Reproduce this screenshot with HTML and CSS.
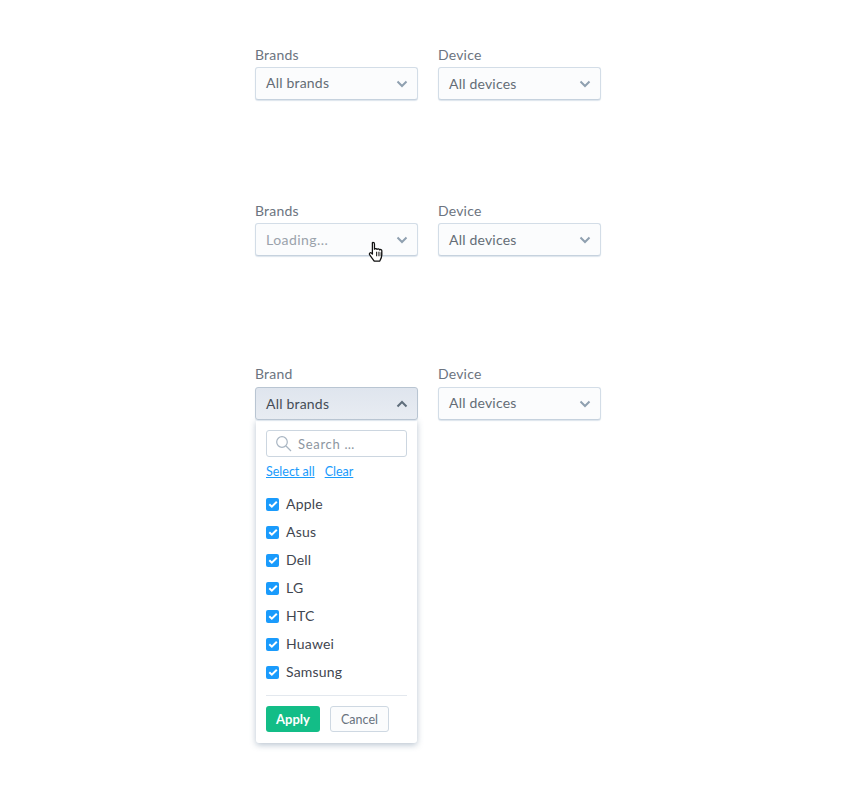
FILE: index.html
```html
<!DOCTYPE html>
<html lang="en">
<head>
<meta charset="UTF-8">
<title>Filters</title>
<link rel="stylesheet" href="styles.css">
</head>
<body>
<div class="page">
	<div class="row row-first">
		<div class="field">
			<label class="lbl">Brands</label>
			<div class="select">
				<span class="val val-up">All brands</span>
				<svg class="arrow" width="12" height="8" viewBox="0 0 12 8"><path d="M1.500 1.500 6 6l4.500-4.500"/></svg>
			</div>
		</div>
		<div class="field">
			<label class="lbl">Device</label>
			<div class="select">
				<span class="val">All devices</span>
				<svg class="arrow" width="12" height="8" viewBox="0 0 12 8"><path d="M1.500 1.500 6 6l4.500-4.500"/></svg>
			</div>
		</div>
	</div>

	<div class="row row-second">
		<div class="field">
			<label class="lbl">Brands</label>
			<div class="select">
				<span class="val loading">Loading...</span>
				<svg class="arrow" width="12" height="8" viewBox="0 0 12 8"><path d="M1.500 1.500 6 6l4.500-4.500"/></svg>
				<svg class="cursor" width="16" height="20" viewBox="0 0 16 20">
					<path d="M4.500 1.600c.8 0 1.300.6 1.300 1.400v4.600c.2-.8 2-.9 2.200.1.400-.7 2-.6 2.200.4.500-.5 1.900-.3 2 .8v3.400c0 2.700-1.300 4.600-1.900 5.700H5.600C4.700 16.600 2.600 14 1.600 12.400c-.7-1.100.5-2.300 1.500-1.500l.9.800V3c0-.8-.3-1.400.5-1.400z" fill="#fff" stroke="#111" stroke-width="1.100" stroke-linejoin="round"/>
					<path d="M7.700 9.800v4M9.700 9.800v4M11.600 10.300v3.500" fill="none" stroke="#111" stroke-width=".9"/>
				</svg>
			</div>
		</div>
		<div class="field">
			<label class="lbl">Device</label>
			<div class="select">
				<span class="val">All devices</span>
				<svg class="arrow" width="12" height="8" viewBox="0 0 12 8"><path d="M1.500 1.500 6 6l4.500-4.500"/></svg>
			</div>
		</div>
	</div>

	<div class="row row-third">
		<div class="field">
			<label class="lbl">Brand</label>
			<div class="select open">
				<span class="val">All brands</span>
				<svg class="arrow" width="12" height="8" viewBox="0 0 12 8"><path d="M1.500 6.500 6 2l4.500 4.500"/></svg>
			</div>
			<div class="menu">
				<div class="search">
					<svg width="17" height="17" viewBox="0 0 17 17"><circle cx="7" cy="7" r="5.300"/><path d="m11 11 5 5"/></svg>
					<span>Search …</span>
				</div>
				<div class="links"><a href="#">Select all</a><a href="#">Clear</a></div>
				<ul class="list">
					<li><span class="check"><svg width="14" height="14" viewBox="0 0 14 14"><path d="m3.300 7.300 2.500 2.400 5-5"/></svg></span>Apple</li>
					<li><span class="check"><svg width="14" height="14" viewBox="0 0 14 14"><path d="m3.300 7.300 2.500 2.400 5-5"/></svg></span>Asus</li>
					<li><span class="check"><svg width="14" height="14" viewBox="0 0 14 14"><path d="m3.300 7.300 2.500 2.400 5-5"/></svg></span>Dell</li>
					<li><span class="check"><svg width="14" height="14" viewBox="0 0 14 14"><path d="m3.300 7.300 2.500 2.400 5-5"/></svg></span>LG</li>
					<li><span class="check"><svg width="14" height="14" viewBox="0 0 14 14"><path d="m3.300 7.300 2.500 2.400 5-5"/></svg></span>HTC</li>
					<li><span class="check"><svg width="14" height="14" viewBox="0 0 14 14"><path d="m3.300 7.300 2.500 2.400 5-5"/></svg></span>Huawei</li>
					<li><span class="check"><svg width="14" height="14" viewBox="0 0 14 14"><path d="m3.300 7.300 2.500 2.400 5-5"/></svg></span>Samsung</li>
				</ul>
				<div class="actions">
					<button class="apply">Apply</button>
					<button class="cancel">Cancel</button>
				</div>
			</div>
		</div>
		<div class="field">
			<label class="lbl">Device</label>
			<div class="select">
				<span class="val val-up">All devices</span>
				<svg class="arrow" width="12" height="8" viewBox="0 0 12 8"><path d="M1.500 1.500 6 6l4.500-4.500"/></svg>
			</div>
		</div>
	</div>
</div>
</body>
</html>
```

FILE: styles.css
```css
*{margin:0;padding:0;box-sizing:border-box;}
html{background:#fff;}
body{
	font-family:'Lato','Open Sans',sans-serif;
	font-size:14px;
	color:#464e56;
}
ul li{list-style:none;}
a{color:#1a9bfc;}

.page{width:346px;margin-left:255px;padding-bottom:48px;}
.row{display:grid;grid-template-columns:163px 163px;column-gap:20px;align-items:start;}
.row-first{padding-top:47px;}
.row-second{padding-top:103px;}
.row-third{padding-top:110px;}

.lbl{display:block;height:20px;line-height:15px;font-size:14px;color:#6c7480;letter-spacing:.2px;}
.row-third .lbl{height:21px;}

.select{
	position:relative;
	display:flex;
	align-items:center;
	justify-content:space-between;
	height:33px;
	padding:0 9px 0 10px;
	background:#fbfcfd;
	border:1px solid #d3dde7;
	border-bottom-color:#c6d2de;
	border-radius:3px;
	box-shadow:0 1px 1px rgba(170,190,210,.4);
}
.val{font-size:14px;line-height:20px;padding-top:1px;color:#646d76;letter-spacing:.2px;}
.val-up{padding:0 0 1px;}
.loading{color:#9aa2ab;letter-spacing:.45px;}
.arrow{fill:none;stroke:#8fa0b0;stroke-width:2;}
.cursor{position:absolute;left:113px;top:18px;transform:scale(1.150);}

.select.open{
	background:linear-gradient(#dfe5ee,#e8ecf2);
	border-color:#b9c5d2;
}
.open .val{color:#454d57;}
.open .arrow{stroke:#5f6e7c;}

.menu{
	height:323px;
	margin:0 1px;
	padding:10px 10px 0;
	background:#fff;
	border-radius:0 0 3px 3px;
	box-shadow:0 2px 6px rgba(100,125,150,.45);
}
.search{
	display:flex;
	align-items:center;
	gap:6px;
	height:27px;
	padding-left:8px;
	border:1px solid #ccd6e0;
	border-radius:3px;
	font-size:13px;
	color:#8d96a0;
	letter-spacing:.7px;
}
.search svg{fill:none;stroke:#a8b5c2;stroke-width:1.200;}
.links{display:flex;gap:10px;margin-top:7px;font-size:12.500px;line-height:16px;}
.list{margin-top:9px;}
.list li{display:flex;align-items:center;gap:7px;height:28px;font-size:14px;color:#3f4650;letter-spacing:.2px;}
.check{display:flex;width:13px;height:13px;margin-top:2px;background:#1a9bfc;border-radius:2px;align-items:center;justify-content:center;}
.check svg{flex:none;fill:none;stroke:#fff;stroke-width:2;}

.actions{display:flex;gap:10px;margin-top:10px;padding-top:10px;border-top:1px solid #e3e8ee;}
.actions button{height:26px;border-radius:3px;font-family:inherit;}
.apply{width:54px;border:none;background:#13bd87;color:#fff;font-size:13px;font-weight:700;}
.cancel{width:59px;border:1px solid #ced8e2;background:#fbfcfd;color:#68727d;font-size:12.500px;}
```
